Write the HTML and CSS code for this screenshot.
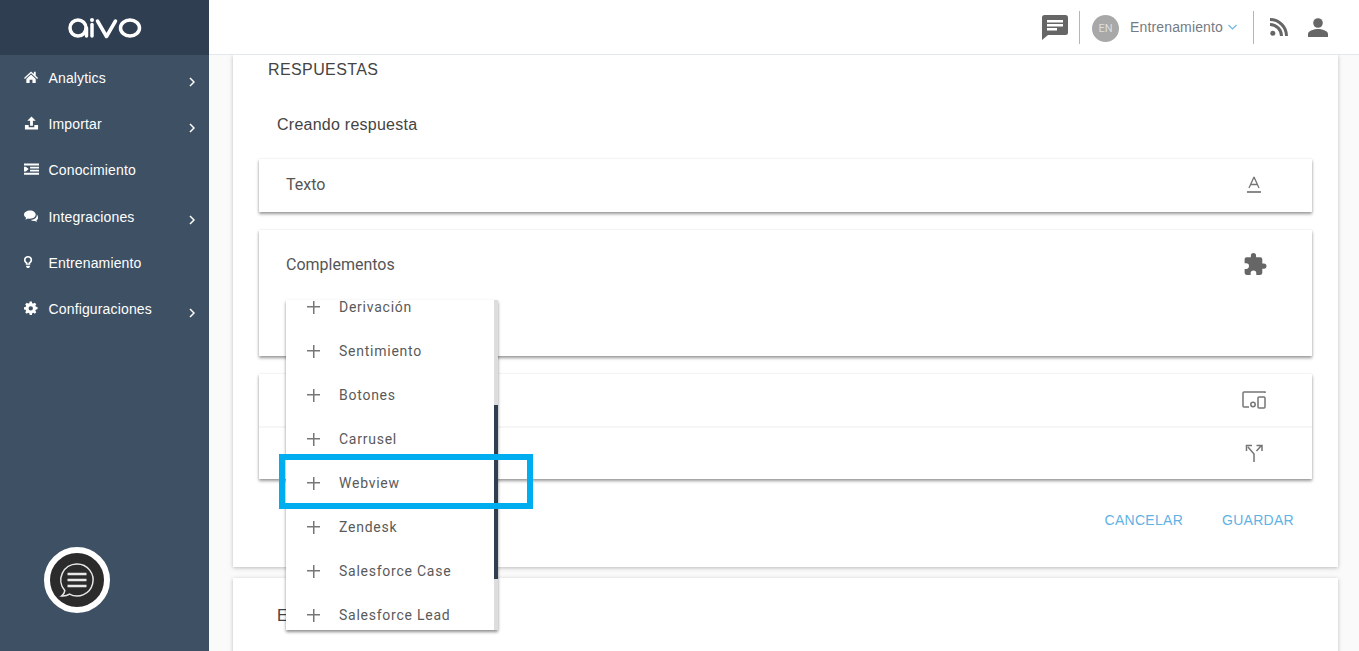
FILE: index.html
```html
<!DOCTYPE html>
<html>
<head>
  <meta charset="utf-8">
  <link rel="stylesheet" href="styles.css">
</head>
<body>
  <aside class="sidebar">
    <div class="brand">
      <svg class="brand-logo" width="74" height="26" viewBox="0 0 74 26" role="img" aria-label="aivo">
        <g fill="none" stroke="#fff" stroke-width="3.500" stroke-linecap="round" stroke-linejoin="round">
          <circle cx="10" cy="13" r="8"/>
          <path d="M18.500 13v8"/>
          <path d="M24 9.500V21"/>
          <path d="M29.500 6l9 15.500L47.500 6"/>
          <ellipse cx="62" cy="13" rx="9.500" ry="8"/>
        </g>
        <circle cx="24" cy="5" r="2" fill="#fff"/>
      </svg>
    </div>
    <nav class="nav">
      <a class="nav-item">
        <svg class="nav-icon" viewBox="0 0 16 14"><path d="M7.500 1 0 8l1 1 6.500-6 6.500 6 1-1-2.500-2.400V1.500h-2v2.200zM7.500 4.300 2.500 9v4.500h3.500V10h3v3.500h3.500V9z"/></svg>
        <span class="nav-label">Analytics</span>
        <svg class="nav-arrow" viewBox="0 0 6 10"><path d="M1 1l4 4-4 4"/></svg>
      </a>
      <a class="nav-item">
        <svg class="nav-icon" viewBox="0 0 16 14"><path d="M8 0 3.500 4.500h3V10h3V4.500h3zM1 9h4v2.500h6V9h4v5H1z"/></svg>
        <span class="nav-label">Importar</span>
        <svg class="nav-arrow" viewBox="0 0 6 10"><path d="M1 1l4 4-4 4"/></svg>
      </a>
      <a class="nav-item">
        <svg class="nav-icon" viewBox="0 0 16 14"><path d="M0 1h16v2.200H0zM6.500 4.500H16v2H6.500zM6.500 7.700H16v2H6.500zM0 11h16v2.200H0zM0 4.500h2L5 7 2 9.700H0z"/></svg>
        <span class="nav-label">Conocimiento</span>
      </a>
      <a class="nav-item">
        <svg class="nav-icon" viewBox="0 0 16 14"><path d="M6.500 1C3 1 0 3 0 5.500c0 1.400.9 2.600 2.200 3.400L1.500 11l2.700-1.400c.7.200 1.500.300 2.300.300 3.500 0 6-2 6-4.400S10 1 6.500 1z"/><path d="M13.500 5c.2.300.2.600.2.900 0 2.900-2.900 5-6.500 5.300.9.800 2.200 1.200 3.600 1.200l.9-.1 2 1.200-.5-1.800c1.100-.7 1.800-1.700 1.800-2.900 0-1.600-.6-2.900-1.500-3.800z"/></svg>
        <span class="nav-label">Integraciones</span>
        <svg class="nav-arrow" viewBox="0 0 6 10"><path d="M1 1l4 4-4 4"/></svg>
      </a>
      <a class="nav-item">
        <svg class="nav-icon" viewBox="0 0 16 14"><path transform="translate(-3.700 0)" d="M8 .5A4.300 4.300 0 0 0 5.600 8.400V10h4.800V8.400A4.300 4.300 0 0 0 8 .5zm0 1.700a2.600 2.600 0 0 1 1 5 1 1 0 0 0-.4.300V8.500H7.400V7.500A1 1 0 0 0 7 7.200a2.600 2.600 0 0 1 1-5zM6 11h4v1l-1 1.500H7L6 12z" fill-rule="evenodd"/></svg>
        <span class="nav-label">Entrenamiento</span>
      </a>
      <a class="nav-item">
        <svg class="nav-icon" viewBox="0 0 16 14"><path transform="translate(-.8 0)" fill-rule="evenodd" d="M6.800 0h2.400l.3 1.800 1.300.5 1.500-1 1.600 1.700-1 1.400.6 1.300 1.700.3v2.400l-1.700.3-.6 1.300 1 1.400-1.600 1.700-1.500-1-1.300.5-.3 1.800H6.800l-.3-1.800-1.300-.5-1.500 1L2.100 11.600l1-1.400-.6-1.300L.8 8.600V6.200l1.700-.3.6-1.300-1-1.400L3.700 1.300l1.500 1 1.300-.5zM8 5a2.300 2.300 0 1 0 0 4.700A2.300 2.300 0 0 0 8 5z"/></svg>
        <span class="nav-label">Configuraciones</span>
        <svg class="nav-arrow" viewBox="0 0 6 10"><path d="M1 1l4 4-4 4"/></svg>
      </a>
    </nav>
    <div class="chat-bubble">
      <svg width="38" height="38" viewBox="0 0 38 38" fill="none" stroke="#e8e8e8">
        <path stroke-width="1.500" d="M19 3a16 16 0 1 1-7.500 30.100C9.500 34.500 7 35.300 3.500 35c1.800-1.200 3-2.900 3.300-5.400A16 16 0 0 1 19 3z"/>
        <path stroke-width="2.500" d="M9.500 13h19M9.500 19h19M9.500 25h19"/>
      </svg>
    </div>
  </aside>

  <div class="main">
    <header class="topbar">
      <svg class="top-chat" width="26" height="26" viewBox="0 0 26 26"><path fill="#666" d="M2.500 1h21A2.500 2.500 0 0 1 26 3.500v15a2.500 2.500 0 0 1-2.500 2.500H6l-6 5V3.500A2.500 2.500 0 0 1 2.500 1z"/><path fill="#fff" d="M5 6h16v2.500H5zM5 10h16v2.500H5zM5 14h10v2.500H5z"/></svg>
      <span class="top-divider"></span>
      <span class="avatar">EN</span>
      <span class="account">Entrenamiento</span>
      <svg class="account-arrow" width="9" height="6" viewBox="0 0 9 6"><path d="M.5 1l4 4 4-4" fill="none" stroke="#6fb7e3" stroke-width="1.200"/></svg>
      <span class="top-divider"></span>
      <svg class="top-rss" width="18" height="18" viewBox="0 0 18 18"><circle cx="2.800" cy="15.200" r="2.500" fill="#666"/><path d="M0 6.500a11.500 11.500 0 0 1 11.500 11.500M0 1.500A16.500 16.500 0 0 1 16.500 18" fill="none" stroke="#666" stroke-width="3"/></svg>
      <svg class="top-user" width="20" height="19" viewBox="0 0 20 19"><circle cx="10" cy="5" r="4.800" fill="#666"/><path fill="#666" d="M0 19v-3c0-3.300 6.500-5 10-5s10 1.700 10 5v3z"/></svg>
    </header>

    <div class="content">
      <section class="panel">
        <h2 class="panel-title">RESPUESTAS</h2>
        <h3 class="panel-sub">Creando respuesta</h3>

        <div class="card card-text">
          <span>Texto</span>
          <svg class="card-icon" width="16" height="18" viewBox="0 0 16 18" fill="none" stroke="#757575"><path stroke-width="1.300" d="M3 12 7.800 1.500h.4L13 12M4.500 8.500h7"/><path stroke-width="1.700" d="M1 16h14"/></svg>
        </div>

        <div class="card card-addons">
          <span>Complementos</span>
          <svg class="card-icon icon-puzzle" width="25" height="25" viewBox="0 0 24 24"><path fill="#666" d="M21 11h-1.500V7a2 2 0 0 0-2-2h-4V3.500a2.500 2.500 0 0 0-5 0V5h-4a2 2 0 0 0-2 2v3.800H4a2.700 2.700 0 0 1 0 5.400H2.500V20a2 2 0 0 0 2 2h3.800v-1.500a2.700 2.700 0 0 1 5.400 0V22h3.800a2 2 0 0 0 2-2v-4H21a2.500 2.500 0 0 0 0-5z"/></svg>
        </div>

        <div class="card card-split">
          <div class="split-row row-devices">
            <svg class="card-icon" width="24" height="18" viewBox="0 0 24 18" fill="none" stroke="#757575" stroke-width="1.500"><path d="M23 2V1H2a1 1 0 0 0-1 1v13a1 1 0 0 0 1 1h5"/><circle cx="11" cy="13.500" r="2.200"/><rect x="16" y="6" width="7" height="11" rx="1"/></svg>
          </div>
          <div class="split-row row-fork">
            <svg class="card-icon" width="18" height="20" viewBox="0 0 18 20" fill="none" stroke="#757575" stroke-width="1.500"><path d="M9 19v-8L3 4M11.500 8 16 3M1.500 8V2.500H7M11.500 2.500H17V8"/></svg>
          </div>
        </div>

        <div class="actions">
          <a class="action">CANCELAR</a>
          <a class="action">GUARDAR</a>
        </div>
      </section>

      <section class="panel panel-next">
        <h3 class="panel-sub">E</h3>
      </section>
    </div>
  </div>

  <div class="addon-menu">
    <div class="addon-list">
      <div class="addon-item"><span class="addon-plus"></span>Derivación</div>
      <div class="addon-item"><span class="addon-plus"></span>Sentimiento</div>
      <div class="addon-item"><span class="addon-plus"></span>Botones</div>
      <div class="addon-item"><span class="addon-plus"></span>Carrusel</div>
      <div class="addon-item"><span class="addon-plus"></span>Webview</div>
      <div class="addon-item"><span class="addon-plus"></span>Zendesk</div>
      <div class="addon-item"><span class="addon-plus"></span>Salesforce Case</div>
      <div class="addon-item"><span class="addon-plus"></span>Salesforce Lead</div>
    </div>
    <div class="addon-scroll"><div class="addon-thumb"></div></div>
  </div>
  <div class="highlight"></div>
</body>
</html>
```

FILE: styles.css
```css
html, body {
  height: 100%;
}
body {
  margin: 0;
  display: flex;
  overflow: hidden;
  font-family: Roboto, sans-serif;
  color: #333;
  background-color: #fafafa;
}

/* sidebar */
.sidebar {
  width: 209px;
  flex-shrink: 0;
  display: flex;
  flex-direction: column;
  background-color: #3d5064;
}
.brand {
  height: 55px;
  display: flex;
  align-items: center;
  justify-content: center;
  background-color: #2f3e51;
}
.brand-logo {
  margin-top: 1px;
}
.nav-item {
  height: 46.200px;
  display: flex;
  align-items: center;
  padding: 0 12px 0 24px;
  font-family: "Liberation Sans", Arial, sans-serif;
  font-size: 14px;
  letter-spacing: 0.15px;
  color: #fff;
}
.nav-icon {
  width: 15px;
  height: 14px;
  fill: #fff;
  margin-right: 9.500px;
  flex-shrink: 0;
  position: relative;
  top: -1px;
}
.nav-label {
  flex: 1;
}
.nav-arrow {
  width: 6px;
  height: 10px;
  fill: none;
  stroke: #fff;
  stroke-width: 1.500;
  margin: 7px 2px 0 0;
}
.chat-bubble {
  width: 54px;
  height: 54px;
  margin: auto 0 38px 44px;
  border: 6px solid #fff;
  border-radius: 50%;
  background-color: #2b2b2b;
  display: flex;
  align-items: center;
  justify-content: center;
}

/* top bar */
.main {
  flex: 1;
  min-width: 0;
  display: flex;
  flex-direction: column;
}
.topbar {
  height: 54px;
  flex-shrink: 0;
  display: flex;
  align-items: center;
  background-color: #fff;
  border-bottom: 1px solid #e3e8ee;
  padding-left: 833px;
}
.top-chat {
  margin-right: 11px;
}
.top-divider {
  width: 1px;
  height: 33px;
  background-color: #b5b5b5;
}
.avatar {
  width: 27px;
  height: 27px;
  margin: 2px 11px 0 12px;
  border-radius: 50%;
  background-color: #a8a8a8;
  color: #ddd;
  font-size: 11px;
  display: flex;
  align-items: center;
  justify-content: center;
}
.account {
  font-family: "Liberation Sans", Arial, sans-serif;
  font-size: 14px;
  letter-spacing: 0.15px;
  color: #757b84;
}
.account-arrow {
  margin: 0 16px 0 5px;
}
.top-rss {
  margin: 0 20px 0 16px;
}

/* content */
.content {
  flex: 1;
  overflow: hidden;
  padding: 0 21px 0 24px;
}
.panel {
  background-color: #fff;
  box-shadow: 0 1px 4px rgba(0, 0, 0, 0.25);
  padding: 0 26px;
  height: 512px;
  margin-bottom: 11px;
  box-sizing: border-box;
}
.panel-next {
  height: 100px;
}
.panel-title {
  margin: 0;
  padding: 5px 0 0 9px;
  font-family: "Liberation Sans", Arial, sans-serif;
  font-size: 16px;
  font-weight: 400;
  line-height: 19px;
  letter-spacing: 0.4px;
  color: #444;
}
.panel-sub {
  margin: 0;
  padding: 36px 0 0 18px;
  font-family: "Liberation Sans", Arial, sans-serif;
  font-size: 16px;
  font-weight: 400;
  line-height: 19px;
  letter-spacing: 0.25px;
  color: #444;
}
.panel-next .panel-sub {
  padding: 28px 0 0 18px;
}
.card {
  background-color: #fff;
  box-shadow: 0 2px 3px rgba(0, 0, 0, 0.4), 0 0 2px rgba(0, 0, 0, 0.08);
  font-size: 16px;
  color: #555;
  display: flex;
  justify-content: space-between;
  padding: 0 50px 0 27px;
}
.card-text {
  height: 53px;
  margin-top: 25px;
  align-items: center;
  box-sizing: border-box;
  padding-bottom: 2px;
}
.card-addons {
  height: 126px;
  margin-top: 18px;
  padding-top: 25px;
  align-items: flex-start;
  box-sizing: border-box;
}
.icon-puzzle {
  margin: -3px -5px 0 0;
}
.card-split {
  height: 105px;
  margin-top: 18px;
  flex-direction: column;
  padding: 0;
}
.split-row {
  flex: 1;
  display: flex;
  align-items: center;
  justify-content: flex-end;
}
.row-devices {
  padding-right: 46px;
}
.row-fork {
  padding-right: 49px;
}
.split-row + .split-row {
  border-top: 2px solid #f6f6f6;
}
.actions {
  display: flex;
  justify-content: flex-end;
  gap: 39px;
  padding: 33px 18px 0 0;
}
.action {
  font-family: "Liberation Sans", Arial, sans-serif;
  font-size: 14px;
  letter-spacing: 0.28px;
  color: #5fb2e4;
}

/* overlays */
.addon-menu {
  position: absolute;
  left: 286px;
  top: 300px;
  width: 212px;
  height: 330px;
  overflow: hidden;
  display: flex;
  background-color: #fff;
  box-shadow: 0 2px 3px rgba(0, 0, 0, 0.45);
}
.addon-list {
  flex: 1;
  margin-top: -15px;
}
.addon-item {
  height: 44px;
  display: flex;
  align-items: center;
  font-size: 14px;
  letter-spacing: 0.75px;
  color: #5a5a5a;
}
.addon-plus {
  width: 13px;
  height: 13px;
  margin: 0 19px 0 21px;
  background:
    linear-gradient(#777, #777) center / 13px 1.500px no-repeat,
    linear-gradient(#777, #777) center / 1.500px 13px no-repeat;
}
.addon-scroll {
  width: 4px;
  background-color: #ddd;
  padding-top: 105px;
}
.addon-thumb {
  height: 174px;
  background-color: #2f3e51;
}
.highlight {
  position: absolute;
  left: 279px;
  top: 454px;
  width: 254px;
  height: 55px;
  box-sizing: border-box;
  border: 6px solid #00adef;
}
```
